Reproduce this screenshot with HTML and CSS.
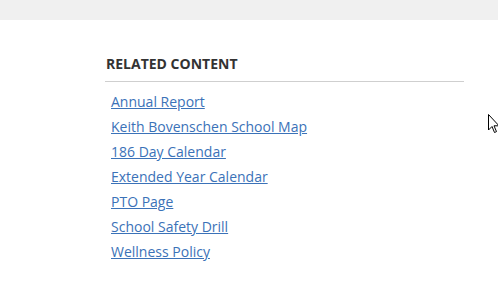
FILE: index.html
```html
<!DOCTYPE html>
<html>
<head>
<meta charset="utf-8">
<link rel="stylesheet" href="styles.css">
</head>
<body>
<div class="topbar"></div>
<section class="related">
  <h2 class="related-title">RELATED CONTENT</h2>
  <ul class="related-list">
    <li><a href="#">Annual Report</a></li>
    <li><a href="#">Keith Bovenschen School Map</a></li>
    <li><a href="#">186 Day Calendar</a></li>
    <li><a href="#">Extended Year Calendar</a></li>
    <li><a href="#">PTO Page</a></li>
    <li><a href="#">School Safety Drill</a></li>
    <li><a href="#">Wellness Policy</a></li>
  </ul>
</section>
<svg class="cursor" width="12" height="20" viewBox="0 0 12 20">
  <path d="M0.5 0.5 L0.5 16 L4 12.5 L6.5 18.5 L8.5 17.6 L6 11.8 L11 11.8 Z" fill="#fff" stroke="#000" stroke-width="1" stroke-linejoin="miter"/>
</svg>
</body>
</html>
```
FILE: styles.css
```css
html, body {
  margin: 0;
  padding: 0;
  background: #fff;
}
body {
  font-family: "Open Sans", "Liberation Sans", sans-serif;
  width: 498px;
  height: 302px;
  overflow: hidden;
  position: relative;
}
.topbar {
  height: 20px;
  background: #f0f0f0;
}
.related {
  margin-left: 105px;
  width: 359px;
  padding-top: 34px;
}
.related-title {
  margin: 0;
  font-size: 14px;
  font-weight: 700;
  color: #333;
  line-height: 20px;
  padding-bottom: 7px;
  padding-left: 1px;
  border-bottom: 1px solid #cfcfcf;
}
.related-list {
  list-style: none;
  margin: 0;
  padding: 7px 0 0 6px;
}
.related-list li {
  height: 25px;
  line-height: 25px;
  font-size: 14px;
}
.related-list a {
  color: #3b72b8;
  text-decoration: underline;
}
.cursor {
  position: absolute;
  left: 488px;
  top: 114px;
}
```
